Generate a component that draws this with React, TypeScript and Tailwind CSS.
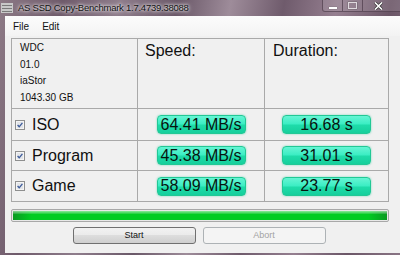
import React from "react";

const rows = [
  { name: "ISO", speed: "64.41 MB/s", time: "16.68 s", h: "h-[32px]" },
  { name: "Program", speed: "45.38 MB/s", time: "31.01 s", h: "h-[30px]" },
  { name: "Game", speed: "58.09 MB/s", time: "23.77 s", h: "h-[31px]" },
];

function Check() {
  return (
    <svg width="10" height="10" viewBox="0 0 10 10" className="shrink-0">
      <rect x="0.5" y="0.5" width="9" height="9" fill="#f4f4f4" stroke="#8e8f8f" />
      <rect x="2" y="2" width="6" height="6" fill="#e2e4e8" />
      <path d="M2.6 5 L4.2 6.8 L7.4 2.8" fill="none" stroke="#3b5a9a" strokeWidth="1.3" />
    </svg>
  );
}

function Pill({ text }: { text: string }) {
  return (
    <div className="mx-auto flex h-[19px] w-[89px] items-center justify-center rounded-[4px] border border-[#22c895] bg-[linear-gradient(to_bottom,#66f5d4_0%,#3aedc3_48%,#1fdcaa_52%,#16cf9c_100%)] text-[16px] leading-none text-[#07140f] shadow-[0_0_2px_rgba(20,200,150,0.6)]">
      {text}
    </div>
  );
}

export default function App() {
  return (
    <div className="flex h-[255px] w-[400px] flex-col overflow-hidden bg-[linear-gradient(100deg,#8d7a86_0%,#6e5a6a_14%,#8f7d8c_27%,#6a5868_40%,#9e8c9a_52%,#6f5b6c_64%,#957f90_76%,#6b5667_88%,#8a7585_100%)] font-['Liberation_Sans',Arial,sans-serif]">
      {/* Title bar */}
      <div className="flex h-[16px] items-start">
        <svg width="12" height="10" viewBox="0 0 12 10" className="ml-[1px] mt-[3px]">
          <rect x="0" y="0" width="12" height="10" fill="#c8c8c8" />
          <rect x="1" y="2" width="10" height="1" fill="#7a7a7a" />
          <rect x="1" y="5" width="10" height="1" fill="#7a7a7a" />
          <rect x="1" y="8" width="10" height="1" fill="#7a7a7a" />
        </svg>
        <span className="ml-[5px] mt-[2px] text-[9.5px] leading-[11px] tracking-[-0.25px] text-[#111] [text-shadow:0_0_5px_#fff,0_0_3px_#fff]">
          AS SSD Copy-Benchmark 1.7.4739.38088
        </span>
        <div className="ml-auto flex h-[12px]">
          <div className="flex w-[21px] items-end justify-center rounded-bl-[3px] border border-t-0 border-[#4d3c4a]/70 bg-white/10 pb-[2px]">
            <div className="h-[2px] w-[8px] bg-white shadow-[0_0_1px_#333]" />
          </div>
          <div className="flex w-[20px] items-center justify-center border-b border-r border-[#4d3c4a]/70 bg-white/10">
            <div className="h-[7px] w-[9px] border border-white/70 shadow-[0_0_1px_#333]" />
          </div>
          <div className="flex w-[37px] items-center justify-center border-b border-[#4d3c4a]/70 bg-white/10 pr-[6px]">
            <svg width="9" height="8" viewBox="0 0 9 8">
              <path d="M1 0.5 L8 7.5 M8 0.5 L1 7.5" stroke="#333" strokeWidth="3" />
              <path d="M1 0.5 L8 7.5 M8 0.5 L1 7.5" stroke="#fff" strokeWidth="1.6" />
            </svg>
          </div>
        </div>
      </div>

      {/* Client */}
      <div className="ml-[5px] flex flex-1 flex-col bg-[#f0f0f0]">
        <div className="flex h-[20px] items-center gap-[13px] bg-gradient-to-b from-[#fcfcfc] to-[#f3f3f3] pl-[8px] text-[10px] text-[#111]">
          <span>File</span>
          <span>Edit</span>
        </div>

        <div className="ml-[6px] mt-[2px] w-[378px]">
          <div className="grid grid-cols-[126px_127px_1fr] border-l border-t border-[#a9a9a9]">
            <div className="flex h-[70px] flex-col border-b border-r border-[#a9a9a9] pl-[8px] pt-[1px] text-[10px] leading-[16.5px] text-[#111]">
              <span>WDC</span>
              <span>01.0</span>
              <span>iaStor</span>
              <span>1043.30 GB</span>
            </div>
            <div className="h-[70px] border-b border-r border-[#a9a9a9] pl-[7px] pt-[3px] text-[16px] leading-[18px] text-[#111]">
              Speed:
            </div>
            <div className="h-[70px] border-b border-r border-[#a9a9a9] pl-[8px] pt-[3px] text-[16px] leading-[18px] text-[#111]">
              Duration:
            </div>

            {rows.map((r) => (
              <React.Fragment key={r.name}>
                <div className={`flex ${r.h} items-center gap-[7px] border-b border-r border-[#a9a9a9] pl-[3px] text-[16px] text-[#111]`}>
                  <Check />
                  <span className="leading-none">{r.name}</span>
                </div>
                <div className={`flex ${r.h} items-center border-b border-r border-[#a9a9a9]`}>
                  <Pill text={r.speed} />
                </div>
                <div className={`flex ${r.h} items-center border-b border-r border-[#a9a9a9]`}>
                  <Pill text={r.time} />
                </div>
              </React.Fragment>
            ))}
          </div>

          {/* Progress */}
          <div className="mt-[7px] h-[13px] rounded-[2px] border border-[#a8a8a8] bg-[#e8e8e8] p-[1px]">
            <div className="h-full w-full bg-[linear-gradient(to_bottom,rgba(255,255,255,0.55)_0%,rgba(255,255,255,0.15)_30%,rgba(255,255,255,0)_35%),linear-gradient(to_right,#0a9a22,#00cc22_5%,#00cc22_95%,#0a9a22)]" />
          </div>

          {/* Buttons */}
          <div className="mt-[5px] flex justify-center gap-[7px] pr-[2px]">
            <button className="h-[17px] w-[123px] rounded-[3px] border border-[#707070] bg-[linear-gradient(to_bottom,#f2f2f2_0%,#ebebeb_45%,#dddddd_50%,#cfcfcf_100%)] text-[9px] leading-none text-[#111]">
              Start
            </button>
            <button className="h-[17px] w-[123px] rounded-[3px] border border-[#adb2b5] bg-[#f4f4f4] text-[9px] leading-none text-[#a3a3a3]">
              Abort
            </button>
          </div>
        </div>
      </div>
      <div className="h-[2px]" />
    </div>
  );
}
